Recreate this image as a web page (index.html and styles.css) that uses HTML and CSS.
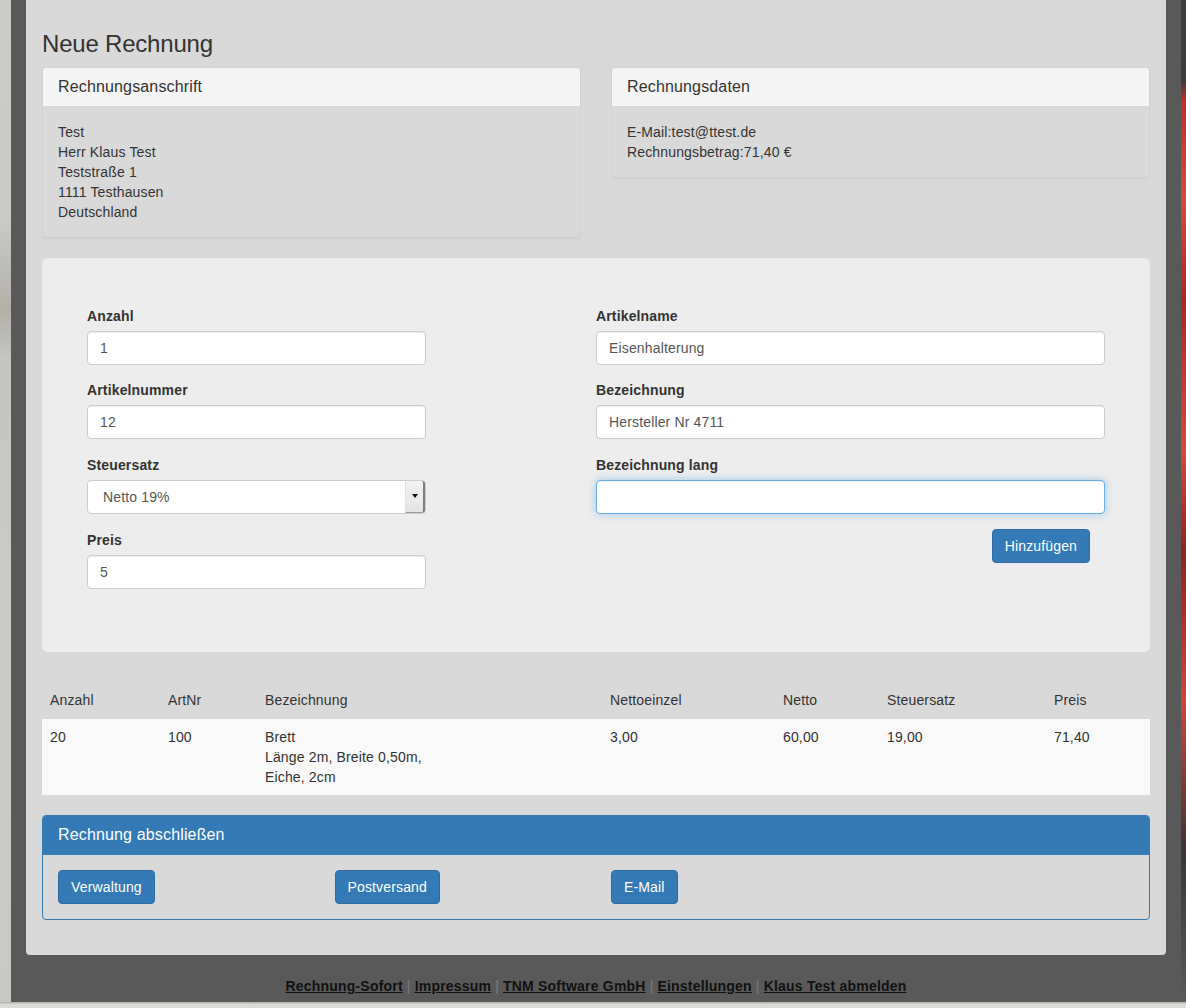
FILE: index.html
```html
<!DOCTYPE html>
<html lang="de">
<head>
<meta charset="utf-8">
<title>Neue Rechnung</title>
<link rel="stylesheet" href="styles.css">
</head>
<body>
<div class="screen">
  <div class="frame">
    <div class="side side-left"></div>
    <div class="shell">
      <main class="content">
        <h3 class="page-title">Neue Rechnung</h3>
        <div class="panels">
          <section class="panel">
            <div class="panel-heading"><h4 class="panel-title">Rechnungsanschrift</h4></div>
            <div class="panel-body">Test<br>Herr Klaus Test<br>Teststraße 1<br>1111 Testhausen<br>Deutschland</div>
          </section>
          <section class="panel">
            <div class="panel-heading"><h4 class="panel-title">Rechnungsdaten</h4></div>
            <div class="panel-body">E-Mail:test@ttest.de<br>Rechnungsbetrag:71,40 €</div>
          </section>
        </div>

        <form class="well">
          <div class="form-col form-col-left">
            <div class="form-group">
              <label>Anzahl</label>
              <input class="form-control" type="text" value="1">
            </div>
            <div class="form-group">
              <label>Artikelnummer</label>
              <input class="form-control" type="text" value="12">
            </div>
            <div class="form-group">
              <label>Steuersatz</label>
              <div class="select">
                <span class="select-value">Netto 19%</span>
                <span class="select-arrow"><span class="caret"></span></span>
              </div>
            </div>
            <div class="form-group last">
              <label>Preis</label>
              <input class="form-control" type="text" value="5">
            </div>
          </div>
          <div class="form-col form-col-right">
            <div class="form-group">
              <label>Artikelname</label>
              <input class="form-control" type="text" value="Eisenhalterung">
            </div>
            <div class="form-group">
              <label>Bezeichnung</label>
              <input class="form-control" type="text" value="Hersteller Nr 4711">
            </div>
            <div class="form-group last">
              <label>Bezeichnung lang</label>
              <input class="form-control is-focus" type="text" value="">
            </div>
            <div class="form-actions">
              <button type="button" class="btn btn-primary">Hinzufügen</button>
            </div>
          </div>
        </form>

        <table class="items">
          <colgroup>
            <col class="c-anzahl"><col class="c-artnr"><col class="c-bez"><col class="c-ne"><col class="c-netto"><col class="c-st"><col class="c-preis">
          </colgroup>
          <thead>
            <tr><th>Anzahl</th><th>ArtNr</th><th>Bezeichnung</th><th>Nettoeinzel</th><th>Netto</th><th>Steuersatz</th><th>Preis</th></tr>
          </thead>
          <tbody>
            <tr><td>20</td><td>100</td><td>Brett<br>Länge 2m, Breite 0,50m,<br>Eiche, 2cm</td><td>3,00</td><td>60,00</td><td>19,00</td><td>71,40</td></tr>
          </tbody>
        </table>

        <section class="panel panel-primary">
          <div class="panel-heading"><h4 class="panel-title">Rechnung abschließen</h4></div>
          <div class="panel-body actions">
            <div class="action-cell"><button type="button" class="btn btn-primary">Verwaltung</button></div>
            <div class="action-cell"><button type="button" class="btn btn-primary">Postversand</button></div>
            <div class="action-cell"><button type="button" class="btn btn-primary">E-Mail</button></div>
            <div class="action-cell"></div>
          </div>
        </section>
      </main>
      <footer class="site-footer">
        <a href="#">Rechnung-Sofort</a><span class="sep">|</span><a href="#">Impressum</a><span class="sep">|</span><a href="#">TNM Software GmbH</a><span class="sep">|</span><a href="#">Einstellungen</a><span class="sep">|</span><a href="#">Klaus Test abmelden</a>
      </footer>
    </div>
    <div class="side side-right"></div>
  </div>
  <div class="bottom-strip"></div>
</div>
</body>
</html>
```

FILE: styles.css
```css
* { box-sizing: border-box; }

html, body {
  margin: 0;
  padding: 0;
  height: 1008px;
  overflow: hidden;
}

body {
  font-family: "Liberation Sans", Arial, Helvetica, sans-serif;
  font-size: 14px;
  line-height: 20px;
  letter-spacing: 0.15px;
  color: #333;
  background: #d0d0cc;
}

.screen {
  display: flex;
  flex-direction: column;
  height: 1008px;
}

.frame {
  display: flex;
  height: 1002px;
}

.side-left {
  width: 11px;
  background: linear-gradient(180deg, #cbcbc7 0%, #c9c9c5 22%, #bdbbb6 27%, #b3b0a9 31%, #c6c5c0 36%, #cacac6 60%, #c8c8c4 100%);
}

.side-right {
  flex: 1;
  background: linear-gradient(180deg, #3c3f40 0%, #3a3c3d 8%, #b8312b 10%, #d44a3f 20%, #a82a25 30%, #cf4b40 45%, #8f2421 55%, #c9463c 70%, #3b3536 85%, #5a5a5a 100%);
}

.shell {
  width: 1170px;
  background: #595959;
  padding: 0 15px;
  display: flex;
  flex-direction: column;
}

.content {
  background: #d9d9d9;
  border-radius: 0 0 4px 4px;
  padding: 31px 16px 15px;
}

.page-title {
  margin: 0 0 10px;
  font-size: 24px;
  line-height: 26px;
  font-weight: normal;
  letter-spacing: -0.2px;
  color: #333;
}

/* panels */
.panels {
  display: grid;
  grid-template-columns: 1fr 1fr;
  column-gap: 30px;
  align-items: start;
}

.panel {
  border: 1px solid #d2d2d2;
  border-radius: 4px;
  box-shadow: 0 1px 1px rgba(0, 0, 0, .05);
  margin-bottom: 20px;
  overflow: hidden;
}

.panel-heading {
  background: #f5f5f5;
  border-bottom: 1px solid #d7d7d7;
  padding: 10px 15px;
}

.panel-title {
  margin: 0;
  font-size: 16px;
  line-height: 17.6px;
  font-weight: normal;
  color: #333;
}

.panel-body {
  padding: 15px;
}

/* form well */
.well {
  display: grid;
  grid-template-columns: 1fr 1fr;
  align-items: start;
  background: #ededed;
  border-radius: 6px;
  padding: 48px 45px;
  margin: 0 0 30px;
}

.form-col-left .form-control,
.form-col-left .select {
  width: 339px;
}

.form-group {
  margin-bottom: 15.67px;
}

.form-group.last {
  margin-bottom: 15px;
}

.form-group label {
  display: block;
  font-weight: bold;
  margin-bottom: 5px;
  color: #333;
}

.form-control {
  display: block;
  width: 100%;
  height: 34px;
  padding: 6px 12px;
  font-family: inherit;
  font-size: 14px;
  line-height: 20px;
  letter-spacing: 0.15px;
  color: #555;
  background: #fff;
  border: 1px solid #ccc;
  border-radius: 4px;
  box-shadow: inset 0 1px 1px rgba(0, 0, 0, .075);
  outline: none;
}

.form-control.is-focus {
  border-color: #66afe9;
  box-shadow: inset 0 1px 1px rgba(0, 0, 0, .075), 0 0 8px rgba(102, 175, 233, .6);
}

.select {
  display: flex;
  height: 34px;
  background: #fff;
  border: 1px solid #ccc;
  border-radius: 4px;
  color: #555;
}

.select-value {
  flex: 1;
  padding: 6px 15px;
}

.select-arrow {
  width: 20px;
  display: flex;
  align-items: center;
  justify-content: center;
  background: linear-gradient(180deg, #f2f2f2, #e4e4e4);
  border-left: 1px solid #e0e0e0;
  border-right: 2px solid #7c7c7c;
  border-bottom: 1px solid #9c9c9c;
  border-radius: 0 3px 3px 0;
}

.caret {
  width: 0;
  height: 0;
  border-left: 3px solid transparent;
  border-right: 3px solid transparent;
  border-top: 4px solid #111;
}

.form-actions {
  text-align: right;
  padding-right: 15px;
}

.btn {
  display: inline-block;
  height: 34px;
  padding: 6px 12px;
  font-family: inherit;
  font-size: 14px;
  line-height: 20px;
  letter-spacing: 0.15px;
  border-radius: 4px;
  cursor: pointer;
}

.btn-primary {
  color: #fff;
  background: #337ab7;
  border: 1px solid #2e6da4;
}

/* table */
.items {
  width: 100%;
  border-collapse: collapse;
  margin-bottom: 20px;
  table-layout: fixed;
}

.c-anzahl { width: 118px; }
.c-artnr { width: 97px; }
.c-bez { width: 345px; }
.c-ne { width: 173px; }
.c-netto { width: 104px; }
.c-st { width: 167px; }
.c-preis { width: 104px; }

.items th,
.items td {
  padding: 8px;
  text-align: left;
  vertical-align: top;
  line-height: 20px;
}

.items th {
  font-weight: normal;
  border-bottom: 1px solid #d6d6d6;
}

.items tbody tr {
  background: #f9f9f9;
}

/* primary panel */
.panel-primary {
  border-color: #337ab7;
  box-shadow: none;
}

.panel-primary .panel-heading {
  background: #337ab7;
  border-bottom-color: #337ab7;
}

.panel-primary .panel-title {
  color: #fff;
  line-height: 18.6px;
}

.actions {
  display: grid;
  grid-template-columns: repeat(4, 1fr);
  padding: 15px 0;
}

.action-cell {
  padding: 0 15px;
}

/* footer */
.site-footer {
  margin-top: 21px;
  text-align: center;
  line-height: 20px;
  font-size: 14px;
  letter-spacing: 0.2px;
}

.site-footer a {
  color: #111;
  font-weight: bold;
  text-decoration: underline;
}

.sep {
  color: #7a7a7a;
  margin: 0 4px;
}

.bottom-strip {
  height: 6px;
  background: linear-gradient(180deg, #a9a9a6 0, #d8d8d4 2px, #deded9 100%);
}
```
